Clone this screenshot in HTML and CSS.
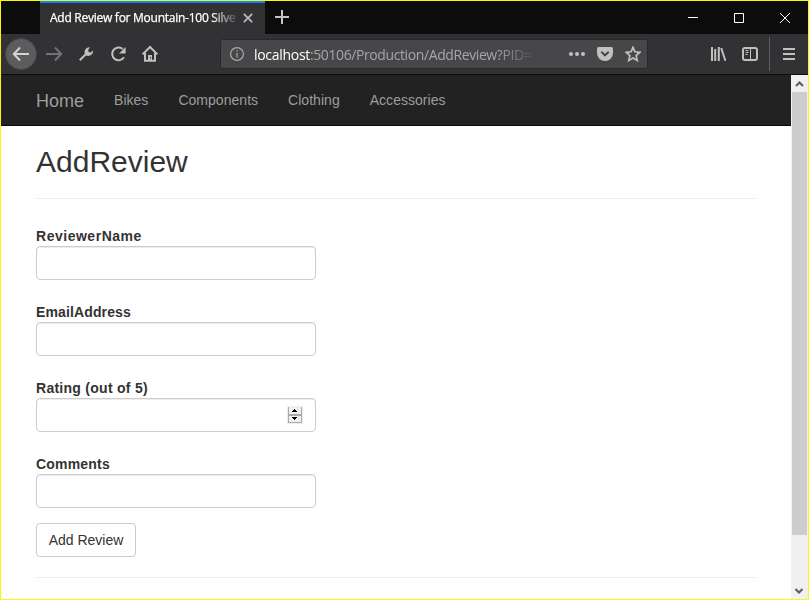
FILE: index.html
```html
<!DOCTYPE html>
<html lang="en">
<head>
<meta charset="utf-8">
<title>Add Review for Mountain-100 Silver</title>
<link rel="stylesheet" href="styles.css">
</head>
<body>
<div class="window">
  <header class="titlebar">
    <div class="tab">
      <span class="tab-title">Add Review for Mountain-100 Silve</span>
      <svg class="tab-close" width="10" height="10" viewBox="0 0 10 10"><path d="M.8.8l8.4 8.4M9.2.8L.8 9.2"/></svg>
    </div>
    <svg class="new-tab" width="14" height="14" viewBox="0 0 14 14"><path d="M7 0v14M0 7h14"/></svg>
    <div class="window-controls">
      <svg width="46" height="32" viewBox="0 0 46 32"><path d="M18 16.5h10"/></svg>
      <svg width="46" height="32" viewBox="0 0 46 32"><path d="M18.5 12.5h9v9h-9z"/></svg>
      <svg width="46" height="32" viewBox="0 0 46 32"><path d="M18 12l10 10M28 12L18 22"/></svg>
    </div>
  </header>

  <div class="toolbar">
    <svg class="tool back" viewBox="0 0 32 32"><circle cx="16" cy="16" r="15.5"/><path d="M24 16H9M15 9.5L8.8 16l6.2 6.5"/></svg>
    <svg class="tool forward" viewBox="0 0 32 32"><path d="M8 16h15M17 9.5l6.2 6.5-6.2 6.5"/></svg>
    <svg class="tool" viewBox="0 0 32 32"><path d="M9.8 22.2l7-7"/><path class="solid" d="M15 16.5c-1.4-3.800 1-7.500 5-7.300l-1.800 2.500.3 2.300 2.300.4 2.300-1.800c.2 3.800-3 6-6.500 5.200z"/></svg>
    <svg class="tool" viewBox="0 0 32 32"><path d="M22 19.300a6.400 6.400 0 1 1-1.300-8.400"/><path class="solid" d="M23.600 9v6.500h-6.500z"/></svg>
    <svg class="tool" viewBox="0 0 32 32"><path d="M8.600 16.400L16 9l7.400 7.400M11 15v7.800h10V15"/><path class="solid" d="M14 17h4v6h-4z"/><path class="door" d="M16.500 19v1.500"/></svg>
    <div class="urlbar">
      <svg class="info" width="14" height="14" viewBox="0 0 14 14"><circle cx="7" cy="7" r="6.400"/><path d="M7 6v4.500M7 3.200v1.600"/></svg>
      <span class="url"><b>localhost</b>:50106/Production/AddReview?PID=</span>
      <svg class="dots" width="16" height="4" viewBox="0 0 16 4"><circle cx="2" cy="2" r="2"/><circle cx="8" cy="2" r="2"/><circle cx="14" cy="2" r="2"/></svg>
      <svg class="pocket" width="16" height="14" viewBox="0 0 16 14"><path class="solid" d="M1.500 0h13Q16 0 16 1.500V6a8 8 0 0 1-16 0V1.500Q0 0 1.500 0z"/><path class="chevron" d="M4.300 4.800L8 8.300l3.700-3.500"/></svg>
      <svg class="star" width="16" height="16" viewBox="0 0 16 16"><path d="M8 1.300l1.900 4.500 4.900.5-3.700 3.200 1.100 4.900L8 11.900l-4.200 2.500 1.100-4.900L1.200 6.300l4.900-.5z"/></svg>
    </div>
    <svg class="tool library" viewBox="0 0 32 32"><path d="M10 9v14M13.200 11v12M16.800 9v14M19.200 10l4.200 12.800"/></svg>
    <svg class="tool" viewBox="0 0 32 32"><rect x="9" y="10" width="14" height="12" rx="2"/><path class="thin" d="M16.500 10v12M11.500 12.500h3M11.500 14.500h3M11.500 16.500h2"/></svg>
    <div class="separator"></div>
    <svg class="tool" viewBox="0 0 32 32"><path d="M10 11h12M10 16h12M10 21h12"/></svg>
  </div>

  <div class="viewport">
    <div class="page">
      <nav class="navbar">
        <a class="brand">Home</a><a>Bikes</a><a>Components</a><a>Clothing</a><a>Accessories</a>
      </nav>
      <main class="content">
        <h2>AddReview</h2>
        <hr>
        <form>
          <div class="field"><label class="label-name" for="name">ReviewerName</label><input id="name" type="text"></div>
          <div class="field"><label class="label-email" for="email">EmailAddress</label><input id="email" type="text"></div>
          <div class="field"><label class="label-rating" for="rating">Rating (out of 5)</label>
            <div class="number"><input id="rating" type="text">
              <svg class="spinner" width="16" height="18" viewBox="0 0 16 18"><path fill="#eee" d="M0 0h16v18H0z"/><path fill="#aaa" d="M1 1h14v16H1z"/><path fill="#f0f0f0" d="M2 0h12v8H2zM2 10h12v6H2z"/><path d="M7 3h1v1h1v1h1v1H5V5h1V4h1zM5 11h5v1h-1v1H8v1H7v-1H6v-1H5z"/></svg>
            </div>
          </div>
          <div class="field"><label class="label-comments" for="comments">Comments</label><input id="comments" type="text"></div>
          <button type="button">Add Review</button>
        </form>
        <hr>
      </main>
    </div>
    <div class="scrollbar">
      <svg width="17" height="17" viewBox="0 0 17 17"><path d="M5 11l3.500-3.500L12 11"/></svg>
      <div class="thumb"></div>
      <svg class="down" width="17" height="17" viewBox="0 0 17 17"><path d="M4.500 7L8 10.500 11.500 7"/></svg>
    </div>
  </div>
</div>
</body>
</html>
```
FILE: styles.css
```css
* { box-sizing: border-box; }
body { margin: 0; overflow: hidden; font-family: "Liberation Sans", Arial, sans-serif; }
svg { display: block; flex: none; fill: none; }
.window { width: 809px; height: 600px; border: 1px solid #f9f515; display: flex; flex-direction: column; }
.titlebar { height: 33px; flex: none; background: #0c0c0c; display: flex; align-items: flex-start; }
.tab { width: 225px; height: 33px; margin-left: 39px; padding-left: 10px; background: #323234; border-top: 2px solid #0a84ff; display: flex; align-items: center; }
.tab-title { width: 187px; font: 12px/18px "Open Sans", sans-serif; letter-spacing: -.26px; color: #fff; -webkit-text-stroke: .25px #fff; white-space: nowrap; margin-top: -1px; -webkit-mask-image: linear-gradient(to right, #000 86%, transparent 102%); mask-image: linear-gradient(to right, #000 86%, transparent 102%); }
.tab-close { margin: 0 0 1px 6px; stroke: #bbb; stroke-width: 1.7; }
.new-tab { margin: 9px 0 0 10px; stroke: #c4c4c4; stroke-width: 2; }
.window-controls { display: flex; margin-left: auto; stroke: #fff; stroke-width: 1; }
.toolbar { height: 41px; flex: none; display: flex; align-items: center; padding-left: 4px; background: #323234; border-bottom: 1px solid #0c0c0d; }
.tool { width: 32px; height: 32px; stroke: #c0c0c0; stroke-width: 2; }
.solid { fill: #c0c0c0; stroke: none; }
.back { stroke: #d4d4d4; margin-right: 1px; }
.back circle { fill: #5c5c5e; stroke: #464648; stroke-width: 1; }
.forward { stroke: #737375; }
.door { stroke: #323234; stroke-width: 1; }
.thin { stroke-width: 1; }
.urlbar { width: 428px; height: 30px; margin-left: 54px; padding-left: 9px; display: flex; align-items: center; background: #474749; border: 1px solid #29292b; border-radius: 2px; }
.info { stroke: #aaa; stroke-width: 1.2; }
.url { width: 281px; margin: 2px 0 0 10px; font: 14px/20px "Open Sans", sans-serif; letter-spacing: -.4px; color: #a6a6a8; white-space: nowrap; -webkit-mask-image: linear-gradient(to right, #000 86%, transparent 101%); mask-image: linear-gradient(to right, #000 86%, transparent 101%); }
.url b { color: #fff; font-weight: 400; letter-spacing: -.3px; }
.dots { margin-left: 34px; fill: #c0c0c0; }
.pocket { margin-left: 12px; }
.chevron { stroke: #474749; stroke-width: 2; }
.star { margin-left: 12px; stroke: #c0c0c0; stroke-width: 1.7; }
.library { margin-left: 54px; }
.separator { width: 1px; height: 34px; margin: 0 3px; background: #5d5d5f; }
.viewport { flex: 1; min-height: 0; display: flex; }
.page { flex: 1; min-width: 0; overflow: hidden; background: #fff; }
.navbar { height: 51px; display: flex; align-items: center; gap: 30px; padding-left: 35px; background: #222; border-bottom: 1px solid #080808; font-size: 14px; letter-spacing: .03px; color: #9d9d9d; }
.brand { font-size: 18px; letter-spacing: 0; position: relative; top: 1px; }
.content { padding: 0 35px; color: #333; font-size: 14px; line-height: 20px; }
h2 { margin: 19px 0 10px; font-size: 30px; line-height: 33px; font-weight: 400; }
hr { height: 1px; margin: 20px 0; border: 0; background: #eee; }
h2 + hr { margin-bottom: 27px; margin-top: 20px; }
.field { width: 280px; margin-bottom: 22px; }
.field:nth-of-type(4) { margin-bottom: 15px; }
label { display: block; font-weight: 700; }
.label-name { letter-spacing: .52px; }
.label-email { letter-spacing: .13px; }
.label-rating { letter-spacing: .27px; }
.label-comments { letter-spacing: .2px; }
input { display: block; width: 280px; height: 34px; padding: 6px 12px; border: 1px solid #ccc; border-radius: 4px; box-shadow: inset 0 1px 1px rgba(0,0,0,.075); background: #fff; }
.number { position: relative; }
.spinner { position: absolute; right: 13px; top: 8px; fill: #000; }
button { display: block; width: 100px; height: 34px; padding: 0; font: 14px/20px "Liberation Sans", Arial, sans-serif; color: #333; background: #fff; border: 1px solid #ccc; border-radius: 4px; }
.scrollbar { width: 17px; background: #f0f0f0; display: flex; flex-direction: column; stroke: #606060; stroke-width: 2.2; }
.thumb { width: 15px; height: 443px; margin-left: 1px; background: #cdcdcd; }
.down { margin-top: auto; }
```
